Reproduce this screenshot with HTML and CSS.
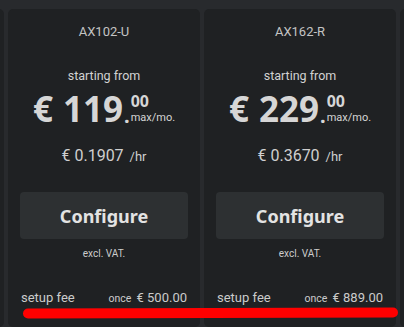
FILE: index.html
```html
<!DOCTYPE html>
<html>
<head>
<meta charset="utf-8">
<link rel="stylesheet" href="styles.css">
</head>
<body>
<div class="row">
  <div class="card edge"></div>
  <div class="card">
    <div class="name">AX102-U</div>
    <div class="from">starting from</div>
    <div class="price"><span class="cur">€</span><span class="int">119</span><span class="dot">.</span><span class="stack"><span class="cents">00</span><span class="per">max/mo.</span></span></div>
    <div class="hourly">€ 0.1907 <span class="hr">/hr</span></div>
    <div class="btn">Configure</div>
    <div class="vat">excl. VAT.</div>
    <div class="setup"><span class="lbl">setup fee</span><span class="amt"><span class="once">once</span> € 500.00</span></div>
  </div>
  <div class="card">
    <div class="name">AX162-R</div>
    <div class="from">starting from</div>
    <div class="price"><span class="cur">€</span><span class="int">229</span><span class="dot">.</span><span class="stack"><span class="cents">00</span><span class="per">max/mo.</span></span></div>
    <div class="hourly">€ 0.3670 <span class="hr">/hr</span></div>
    <div class="btn">Configure</div>
    <div class="vat">excl. VAT.</div>
    <div class="setup"><span class="lbl">setup fee</span><span class="amt"><span class="once">once</span> € 889.00</span></div>
  </div>
  <div class="card edge"></div>
</div>
<div class="mark"></div>
</body>
</html>
```
FILE: styles.css
```css
html, body {
  margin: 0;
  padding: 0;
  background: #282a2d;
  width: 404px;
  height: 327px;
  overflow: hidden;
  font-family: Roboto, "Liberation Sans", sans-serif;
  color: #c9c9c9;
}
.row {
  display: flex;
  justify-content: center;
  gap: 4px;
  width: 404px;
  height: 327px;
  overflow: hidden;
  padding-top: 9px;
  box-sizing: border-box;
}
.card {
  flex: 0 0 192px;
  height: 318px;
  background: #1f2123;
  border-radius: 5px;
  box-sizing: border-box;
  padding: 0 12px;
  display: flex;
  flex-direction: column;
  align-items: center;
}
.name {
  margin-top: 15px;
  font-size: 13px;
  line-height: 16px;
  color: #c4c4c4;
}
.from {
  margin-top: 28px;
  font-size: 12.5px;
  line-height: 16px;
  color: #d2d2d2;
}
.price {
  display: flex;
  align-items: flex-end;
  margin-top: 2px;
  height: 40px;
  color: #d6d6d6;
  font-family: "Noto Sans", sans-serif;
  font-weight: 700;
}
.cur, .int {
  font-size: 35px;
  line-height: 35px;
}
.int { margin-left: 10px; }
.dot {
  font-size: 20px;
  line-height: 20px;
  margin-left: 1px;
}
.stack {
  display: flex;
  flex-direction: column;
  margin-left: 1px;
  padding-bottom: 2px;
}
.cents {
  font-size: 16px;
  line-height: 16px;
  height: 16px;
  font-weight: 700;
}
.per {
  font-family: Roboto, sans-serif;
  font-weight: 400;
  font-size: 11px;
  line-height: 12px;
  height: 12px;
  margin-top: 3px;
}
.hourly {
  margin-top: 21px;
  font-size: 16px;
  line-height: 18px;
  color: #cfcfcf;
}
.hr { font-size: 13px; margin-left: 2px; }
.btn {
  align-self: stretch;
  margin-top: 26px;
  height: 47px;
  background: #2d3032;
  border-radius: 4px;
  display: flex;
  align-items: center;
  justify-content: center;
  font-family: "Noto Sans", sans-serif;
  font-weight: 700;
  font-size: 18px;
  color: #e3e3e3;
}
.vat {
  margin-top: 9px;
  font-size: 10px;
  line-height: 12px;
  color: #cccccc;
}
.setup {
  align-self: stretch;
  margin-top: 30px;
  display: flex;
  justify-content: space-between;
  align-items: baseline;
  padding: 0 1px;
}
.lbl { font-size: 13px; color: #cbcbcb; }
.amt { font-size: 13px; color: #cbcbcb; }
.once { font-size: 10.5px; margin-right: 2px; }
.mark {
  position: absolute;
  left: 23px;
  top: 308px;
  width: 375px;
  height: 10px;
  background: #ff0000;
  border-radius: 6px;
  transform: rotate(-0.15deg);
}
```
